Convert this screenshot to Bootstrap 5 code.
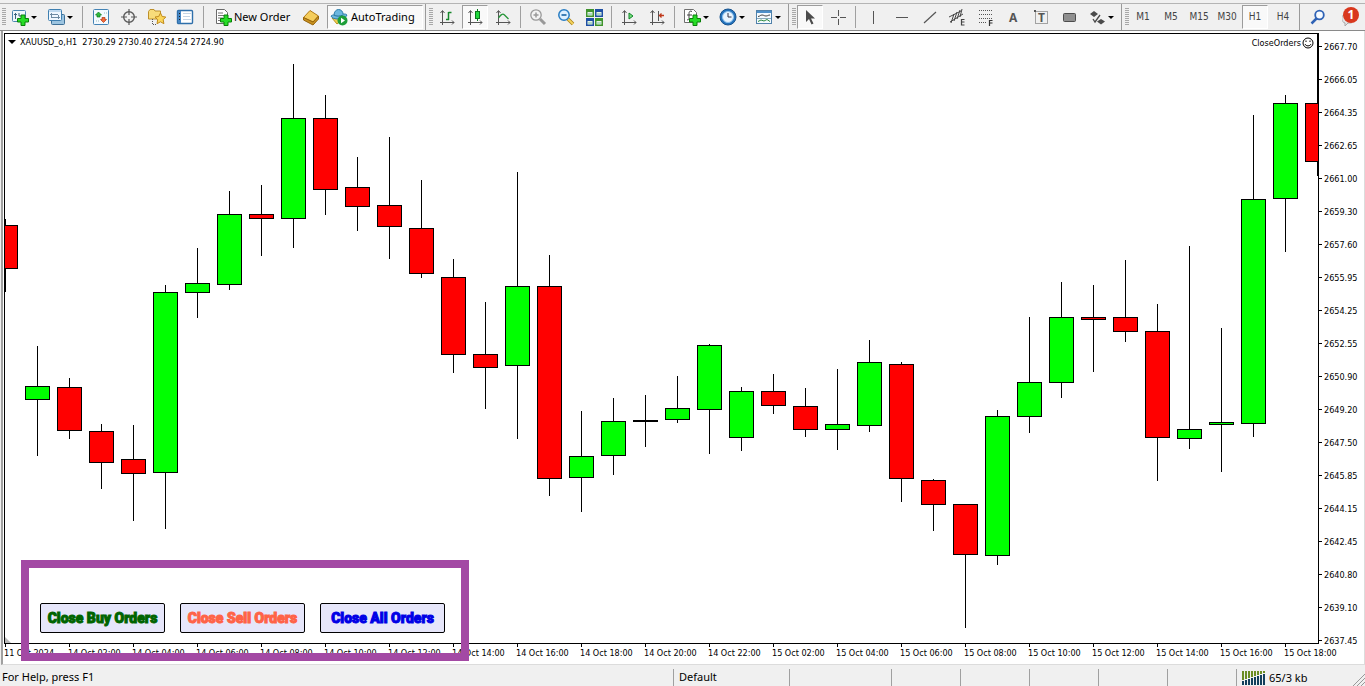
<!DOCTYPE html>
<html lang="en">
<head>
<meta charset="utf-8">
<meta name="viewport" content="width=device-width, initial-scale=1">
<title>XAUUSD_o,H1</title>
<link href="https://cdn.jsdelivr.net/npm/bootstrap@5.3.0/dist/css/bootstrap.min.css" rel="stylesheet">
<style>
  :root { --face: #f0f0f0; --edge: #8a8a8a; --ink: #000; }
  body { background: var(--face); color: var(--ink); font: 11px/16px "Noto Sans", "Open Sans", sans-serif; overflow: hidden; }
  button { color: inherit; }

  /* toolbar */
  .toolstrip { height: 31px; padding-top: 3px; border-bottom: 1px solid var(--edge); background: var(--face); }
  .toolrow { height: 27px; border-top: 1px solid #b4b4b4; }
  .toolgroup + .toolgroup { margin-left: 2px; border-left: 1px solid #9a9a9a; }
  .grip { width: 4px; margin: 4px 0 4px 3px; background: repeating-linear-gradient(#a8a8a8 0 1px, var(--face) 1px 2px); }
  .toolgroup:first-child .grip { margin-left: 2px; }
  .tool { width: 28px; height: 24px; padding: 0; border: 1px solid transparent; background: none; display: flex; align-items: center; justify-content: center; flex: none; }
  .tool svg, .tool-text svg { width: 18px; height: 18px; flex: none; }
  .tool.has-menu { width: 36px; justify-content: flex-start; padding-left: 4px; gap: 2px; }
  .has-menu::after { content: ""; border: 3px solid transparent; border-top-color: #000; border-bottom: 0; }
  .tool-text { border: 1px solid transparent; background: none; padding: 0; height: 24px; display: flex; align-items: center; gap: 2px; white-space: nowrap; flex: none; }
  .order-tool { width: 89px; padding-left: 5px; }
  .trading-tool { width: 96px; padding-left: 2px; margin-left: 2px; gap: 3px; }
  .pressed { background: #f9f9f9; border-color: #9c9c9c #fff #fff #9c9c9c; }
  .tool.pressed { width: 26px; margin: 0 1px; }
  .divide { width: 1px; height: 22px; background: #a0a0a0; margin: 0 3px; flex: none; }
  .period { font: 10px/14px "DejaVu Sans Condensed", "DejaVu Sans", sans-serif; color: #444; }
  .alert-count { top: 1px; left: 5px; width: 16px; height: 16px; border-radius: 8px; background: #d9381e; color: #fff; font: bold 12px/16px "Noto Sans", sans-serif; }

  /* chart window */
  .chartwin { margin-left: 1px; padding: 2px 0 0 1px; border-left: 2px solid #a0a0a0; border-right: 1px solid #dcdcdc; border-bottom: 1px solid #dcdcdc; background: #fff; font: 9px/14px "DejaVu Sans Condensed", "DejaVu Sans", sans-serif; }
  .plot { border: 1px solid #000; overflow: hidden; min-width: 0; }
  .plot svg.candles { width: 100%; height: 100%; display: block; }
  .candles rect, .candles path { stroke: #000; stroke-width: 1; shape-rendering: crispEdges; }
  .up { fill: #0f0; }
  .down { fill: #f00; }
  .symbol { top: 1px; left: 3px; gap: 4px; white-space: pre; }
  .symbol::before { content: ""; border: 4px solid transparent; border-top-color: #000; border-bottom: 0; }
  .expert { top: 2px; right: 4px; gap: 1px; }
  .shift { left: 0; bottom: 0; border: 3px solid transparent; border-left-color: #b8b8b8; border-bottom-color: #b8b8b8; }
  .prices { width: 45px; padding-top: 7px; flex: none; overflow: visible; }
  .prices li { height: 33px; display: flex; align-items: flex-start; gap: 2px; }
  .prices li::before { content: ""; width: 3px; height: 1px; margin-top: 6px; background: #000; }
  .prices li:last-child { height: 14px; margin-bottom: -9px; }
  .times { height: 20px; overflow: hidden; line-height: 12px; }
  .times li { width: 64px; flex: none; white-space: nowrap; }
  .times li::before { content: ""; display: block; width: 1px; height: 3px; margin-left: 1px; background: #000; }

  /* order panel */
  .orders { left: 18px; bottom: 3px; width: 448px; height: 101px; border: 8px solid #a349a4; padding: 35px 0 0 11px; gap: 15px; }
  .order { width: 125px; height: 30px; padding: 0; border: 1px solid #000; border-radius: 2px; background: #e6e6fa; font: 900 14px/24px "Impact", "Roboto", sans-serif; -webkit-text-stroke: 1px currentColor; white-space: nowrap; }
  .buy { color: #006400; }
  .sell { color: #ff6347; }
  .all { color: #0000e6; }

  /* status bar */
  .statusbar { height: 21px; padding-top: 4px; }
  .c-help { padding-left: 2px; }
  .cell { border-left: 1px solid #a0a0a0; padding-left: 5px; white-space: nowrap; flex: none; }
  .c-profile { width: 116px; } .c-date { width: 102px; } .c-price { width: 69px; } .c-net { width: 129px; gap: 3px; }
</style>
</head>
<body class="vh-100 d-flex flex-column">

<nav class="toolstrip flex-shrink-0" aria-label="Toolbar">
 <div class="toolrow d-flex align-items-stretch">
  <div class="toolgroup d-flex align-items-center">
    <span class="grip align-self-stretch"></span>
    <button class="tool has-menu" aria-label="New chart"><svg viewBox="0 0 18 18"><rect x="1.500" y="2.500" width="13" height="11" rx="1" fill="#eef6fb" stroke="#4a86b0"/><path d="M4.500 5v6M3 6.500h3M8 5v3M8 8h5" stroke="#39627e" fill="none"/><path d="M10 7h4v3.500h3.500v3.500H14v3.500h-4V14H6.500v-3.500H10z" fill="#26dc26" stroke="#088008"/></svg></button>
    <button class="tool has-menu" aria-label="Profiles"><svg viewBox="0 0 18 18"><rect x="4.500" y="6.500" width="13" height="10" rx="1" fill="#9cc4e0" stroke="#3d6f96"/><rect x="1.500" y="1.500" width="13" height="11" rx="1" fill="#f0f8ff" stroke="#3f7fb0"/><path d="M2 3h12" stroke="#8ebce0"/><path d="M4.500 5v5M3 6.500h8M5 9.500h8M11.500 7v4" stroke="#6d8ba3" fill="none"/></svg></button>
    <span class="divide mx-1"></span>
    <button class="tool" aria-label="Market Watch"><svg viewBox="0 0 18 18"><rect x="1.500" y="1.500" width="15" height="15" rx="1" fill="#f4faff" stroke="#4383b5"/><path d="M4 13h3M12 5h3" stroke="#9bb" stroke-dasharray="1 1"/><path d="M6.500 4L9.500 7H8v2H5V7H3.500z" fill="#2fbb3d" stroke="#107a20" stroke-width=".7"/><path d="M11.500 14.500L8.500 11.500H10V9.500h3v2h1.500z" fill="#f36c3b" stroke="#b33510" stroke-width=".7"/></svg></button>
    <button class="tool" aria-label="Data Window"><svg viewBox="0 0 18 18" fill="none" stroke="#5a5a5a"><circle cx="9" cy="9" r="5.300" stroke-width="1.400"/><path d="M9 1v6M9 11v6M1 9h6M11 9h6" stroke-width="1.200"/></svg></button>
    <button class="tool" aria-label="Navigator"><svg viewBox="0 0 18 18"><path d="M.500 3.500L2 1.500h4l1 1.500h5.500v8H.500z" fill="#f8dc7a" stroke="#bd902b"/><path d="M4.500 11v5.500H8" stroke="#555" stroke-dasharray="1 1" fill="none"/><path d="M12.500 5l1.700 3.500 3.600.500-2.600 2.700.700 4-3.400-1.900-3.500 1.900.700-4L7 9l3.700-.500z" fill="#fbd65a" stroke="#c08a1c"/></svg></button>
    <button class="tool" aria-label="Terminal"><svg viewBox="0 0 18 18"><rect x="1.500" y="2.500" width="15" height="13" rx="1" fill="#fff" stroke="#2f6faa" stroke-width="1.400"/><rect x="2" y="3" width="3" height="12" fill="#4586c4"/><path d="M7 5.500h8M7 8.500h7M7 11.500h8" stroke="#c4d4e4"/><path d="M3 5.500h1M3 8.500h1M3 11.500h1" stroke="#222"/></svg></button>
    <span class="divide mx-1"></span>
    <button class="tool-text order-tool"><svg viewBox="0 0 18 18"><path d="M2.500 1.500h8l3 3v11h-11z" fill="#fff" stroke="#6b6b6b"/><path d="M4 5h5M4 7.500h7M4 10h5M4 12.500h4" stroke="#777"/><path d="M10 7h4v3.500h3.500v3.500H14v3.500h-4V14H6.500v-3.500H10z" fill="#26dc26" stroke="#088008"/></svg>New Order</button>
    <button class="tool" aria-label="MetaEditor"><svg viewBox="0 0 18 18"><path d="M1.500 9.500L8 2.500l8.500 5.500-5.500 6z" fill="#f5cd5b" stroke="#b17a14"/><path d="M1.500 9.500L11 14l5.500-6v3L11 17l-9.500-5z" fill="#c8911f" stroke="#96640b"/></svg></button>
    <button class="tool-text trading-tool pressed"><svg viewBox="0 0 18 18"><path d="M2 10l5 6 7-6z" fill="#f0cf52" stroke="#ba9321"/><path d="M1 8c1-1 2-1 3-1 0-3 2-5.500 4.500-5.500S13 3.500 13 6c2 0 3.500 0 4 1-1 3-5 4-8.500 4S2 10.500 1 8z" fill="#6cb7df" stroke="#2b7ca9"/><path d="M4 7c2 1.500 6 1.500 9 0" stroke="#247199" fill="none"/><circle cx="12.500" cy="12.500" r="5" fill="#1d9e39"/><path d="M11 9.800v5.400l4-2.700z" fill="#fff"/></svg>AutoTrading</button>
  </div>

  <div class="toolgroup d-flex align-items-center">
    <span class="grip align-self-stretch"></span>
    <button class="tool" aria-label="Bar chart"><svg viewBox="0 0 18 18" fill="none" stroke="#555"><path d="M4.500 17V3M2.500 5l2-2.500 2 2.500M2 14.500h14M14 12.500l2 2-2 2"/><path d="M10.500 4v8M10.500 4.500h3M8 11.500h3" stroke="#16862a" stroke-width="1.500"/></svg></button>
    <button class="tool pressed" aria-label="Candlesticks"><svg viewBox="0 0 18 18" fill="none" stroke="#555"><path d="M4.500 17V3M2.500 5l2-2.500 2 2.500M2 14.500h14M14 12.500l2 2-2 2"/><path d="M11.500 1v12" stroke="#08781b"/><rect x="9.500" y="3.500" width="4" height="7" fill="#20d83d" stroke="#08781b"/></svg></button>
    <button class="tool" aria-label="Line chart"><svg viewBox="0 0 18 18" fill="none" stroke="#555"><path d="M4.500 17V3M2.500 5l2-2.500 2 2.500M2 14.500h14M14 12.500l2 2-2 2"/><path d="M4.500 10c2-3 4-5 6-3l4 4" stroke="#259538" stroke-width="1.300"/></svg></button>
    <span class="divide"></span>
    <button class="tool" aria-label="Zoom in"><svg viewBox="0 0 18 18" fill="none" stroke="#999"><path d="M11 11l5 5" stroke-width="3"/><circle cx="7" cy="7" r="5.200" fill="#f3f3f3" stroke-width="1.300"/><path d="M4.500 7h5M7 4.500v5" stroke-width="1.500"/></svg></button>
    <button class="tool" aria-label="Zoom out"><svg viewBox="0 0 18 18" fill="none"><path d="M11 11l5 5" stroke="#a88118" stroke-width="3.500"/><path d="M11 11l5 5" stroke="#f4d35e" stroke-width="2"/><circle cx="7" cy="7" r="5.200" fill="#dcefff" stroke="#287dc3" stroke-width="1.500"/><path d="M4.500 7h5" stroke="#226ba9" stroke-width="1.700"/></svg></button>
    <button class="tool" aria-label="Tile windows"><svg viewBox="0 0 18 18"><path fill="#3f942e" d="M1 1h8v8H1zM10 10h8v8h-8z"/><path fill="#1f50a4" d="M10 1h8v8h-8zM1 10h8v8H1z"/><path fill="#e8f4e4" d="M2.500 4h5v3.500h-5zM11.500 4h5v3.500h-5zM2.500 13h5v3.500h-5zM11.500 13h5v3.500h-5z"/><path d="M3 6h4M12 6h4M3 15h4M12 15h4" stroke="#7ba"/></svg></button>
    <span class="divide"></span>
    <button class="tool" aria-label="Auto scroll"><svg viewBox="0 0 18 18" fill="none" stroke="#555"><path d="M4.500 17V3M2.500 5l2-2.500 2 2.500M2 14.500h14M14 12.500l2 2-2 2"/><path d="M9 5v6l4-3z" fill="#73df7c" stroke="#118528"/></svg></button>
    <button class="tool" aria-label="Chart shift"><svg viewBox="0 0 18 18" fill="none" stroke="#555"><path d="M4.500 17V3M2.500 5l2-2.500 2 2.500M2 14.500h14M14 12.500l2 2-2 2M10.500 3v10"/><path d="M16 7.500h-4M13.500 5.500l-2 2 2 2" stroke="#c0391b" stroke-width="1.300"/></svg></button>
    <span class="divide"></span>
    <button class="tool has-menu" aria-label="Indicators"><svg viewBox="0 0 18 18"><path d="M1.500 1.500h9l3 3v10h-12z" fill="#fff" stroke="#6f6f6f"/><path d="M9 3.500c-2-1-3 0-3 2v5c0 1-1 2-2 1M4 7h5" fill="none" stroke="#444"/><path d="M10 7h4v3.500h3.500v3.500H14v3.500h-4V14H6.500v-3.500H10z" fill="#26dc26" stroke="#088008"/></svg></button>
    <button class="tool has-menu" aria-label="Periods"><svg viewBox="0 0 18 18"><circle cx="9" cy="9" r="8" fill="#2473bd" stroke="#17538e"/><circle cx="9" cy="9" r="5.500" fill="#e9f5ff" stroke="#8fc3ee"/><path d="M9 5v4h3.500" stroke="#334" fill="none"/></svg></button>
    <button class="tool has-menu" aria-label="Templates"><svg viewBox="0 0 18 18"><rect x="1.500" y="2.500" width="15" height="13" fill="#f4faff" stroke="#5081aa"/><path d="M2 4h14" stroke="#4d8fc9" stroke-width="2"/><path d="M3 8.500c2 0 2-1.500 4-1.500s2 1 4 1 2-1 4-1" stroke="#444" fill="none"/><path d="M2 10.500h14" stroke="#8ab"/><path d="M3 13.500l3-1.500 3 1 3-1.500 3 2" stroke="#2b8a3e" fill="none"/></svg></button>
  </div>

  <div class="toolgroup d-flex align-items-center">
    <span class="grip align-self-stretch"></span>
    <button class="tool pressed" aria-label="Cursor"><svg viewBox="0 0 18 18"><path d="M5 2v12l3-3 2.500 5.500 2-1L10 10.500h4z" fill="#4c4c4c"/></svg></button>
    <button class="tool" aria-label="Crosshair"><svg viewBox="0 0 18 18" stroke="#555"><path d="M9.500 2v6M9.500 11v6M2 9.500h6M11 9.500h6"/></svg></button>
    <span class="divide"></span>
    <button class="tool" aria-label="Vertical line"><svg viewBox="0 0 18 18" stroke="#555"><path d="M9.500 3v13"/></svg></button>
    <button class="tool" aria-label="Horizontal line"><svg viewBox="0 0 18 18" stroke="#555"><path d="M4 9.500h12"/></svg></button>
    <button class="tool" aria-label="Trendline"><svg viewBox="0 0 18 18" stroke="#555"><path d="M4 15L16 4" stroke-width="1.200"/></svg></button>
    <button class="tool" aria-label="Equidistant channel"><svg viewBox="0 0 18 18" stroke="#444" fill="none"><path d="M1 9L13 3M2 14l13-8M3 15L6 6M6 13l3-9M9 11l3-9M12 9l2-8"/><path d="M16.500 11.500h-3v5.500h3M13.500 14h3" stroke-width="1.200"/></svg></button>
    <button class="tool" aria-label="Fibonacci"><svg viewBox="0 0 18 18" stroke="#555" fill="none"><path d="M3 2.500h13M3 6.500h13M3 10.500h13M3 14.500h8" stroke-dasharray="1 1"/><path d="M16.500 12.500h-3V18M13.500 15h3" stroke="#333" stroke-width="1.200"/></svg></button>
    <button class="tool" aria-label="Text"><svg viewBox="0 0 18 18"><text x="5" y="14" font-family="Noto Sans" font-weight="bold" font-size="12" fill="#555">A</text></svg></button>
    <button class="tool" aria-label="Text label"><svg viewBox="0 0 18 18"><rect x="3.500" y="3.500" width="12" height="12" fill="none" stroke="#555" stroke-dasharray="1 1"/><path d="M2 2h2v2H2z" fill="#555"/><text x="6" y="14" font-family="Noto Sans" font-weight="bold" font-size="12" fill="#555">T</text></svg></button>
    <button class="tool" aria-label="Rectangle"><svg viewBox="0 0 18 18"><rect x="3.500" y="5.500" width="12" height="8" rx="1" fill="#8f8f8f" stroke="#4c4c4c"/></svg></button>
    <button class="tool has-menu" aria-label="Arrows"><svg viewBox="0 0 18 18" fill="#4a4a4a"><path d="M6 3l4 3-4 3-4-3zM13 11l4 2.500-4 3-4-3z"/><path d="M5 11l2 3 5-7" fill="none" stroke="#4a4a4a" stroke-width="1.300"/></svg></button>
  </div>

  <div class="toolgroup d-flex align-items-center">
    <span class="grip align-self-stretch"></span>
    <button class="tool period">M1</button>
    <button class="tool period">M5</button>
    <button class="tool period">M15</button>
    <button class="tool period">M30</button>
    <button class="tool period pressed">H1</button>
    <button class="tool period">H4</button>
  </div>

  <div class="toolgroup d-flex align-items-center flex-grow-1 justify-content-between ps-1">
    <button class="tool" aria-label="Search"><svg viewBox="0 0 18 18" fill="none" stroke="#2f62b5"><path d="M7.500 10.500L2.500 15.500" stroke-width="2.500"/><circle cx="10.500" cy="7" r="4.300" fill="#f6faff" stroke-width="1.800"/></svg></button>
    <button class="tool position-relative" aria-label="Messages"><svg viewBox="0 0 18 18"><path d="M1 7.500h8c3 0 3 7 0 7.500H6l-3 3v-3C-1 14-1 8 1 7.500z" fill="#e4e4e4" stroke="#a9a9a9"/></svg><span class="alert-count position-absolute text-center">1</span></button>
  </div>
 </div>
</nav>

<main class="chartwin flex-grow-1 d-flex flex-column position-relative">
  <div class="d-flex flex-grow-1">
    <section class="plot flex-grow-1 position-relative" aria-label="XAUUSD hourly chart">
      <svg class="candles" id="candles"></svg>
      <div class="symbol position-absolute d-flex align-items-center">XAUUSD_o,H1  2730.29 2730.40 2724.54 2724.90</div>
      <div class="expert position-absolute d-flex align-items-center">CloseOrders<svg width="12" height="12" viewBox="0 0 12 12" fill="none" stroke="#000"><circle cx="6" cy="6" r="5"/><path d="M3 7c1 2.500 5 2.500 6 0"/><path d="M4 3.500v1.500M8 3.500v1.500"/></svg></div>
      <span class="shift position-absolute"></span>
    </section>
    <ul class="prices list-unstyled mb-0" id="prices"></ul>
  </div>
  <ul class="times list-unstyled d-flex mb-0" id="times"></ul>
  <div class="orders position-absolute d-flex align-items-start">
    <button class="order buy">Close Buy Orders</button>
    <button class="order sell">Close Sell Orders</button>
    <button class="order all">Close All Orders</button>
  </div>
</main>

<footer class="statusbar d-flex flex-shrink-0">
  <div class="c-help flex-grow-1">For Help, press F1</div>
  <div class="cell c-profile">Default</div>
  <div class="cell c-date"></div>
  <div class="cell c-price"></div>
  <div class="cell c-price"></div>
  <div class="cell c-price"></div>
  <div class="cell c-price"></div>
  <div class="cell c-price"></div>
  <div class="cell c-net d-flex align-items-center position-relative">
    <svg id="signal" width="24" height="14" viewBox="0 0 24 14"></svg>65/3 kb
    <svg class="position-absolute end-0 bottom-0" width="12" height="12" viewBox="0 0 12 12" stroke="#999"><path d="M0 12L12 0M4 12l8-8M8 12l4-4"/></svg>
  </div>
</footer>

<script src="https://cdn.jsdelivr.net/npm/bootstrap@5.3.0/dist/js/bootstrap.bundle.min.js"></script>
<script>
  // one row per hour: high, body top, body bottom, low, direction (d = down, u = up)
  const bars = [
    [219,225,268,291,'d'],[346,386,399,455,'u'],[378,387,430,438,'d'],[424,431,462,488,'d'],[425,459,473,520,'d'],
    [285,292,472,528,'u'],[248,283,292,317,'u'],[191,214,284,289,'u'],[185,214,218,255,'d'],[64,118,218,247,'u'],
    [95,118,189,214,'d'],[157,187,206,230,'d'],[137,205,226,258,'d'],[180,228,273,277,'d'],[259,277,354,372,'d'],
    [302,354,367,408,'d'],[172,286,365,438,'u'],[255,286,478,495,'d'],[411,456,477,511,'u'],[398,421,455,474,'u'],
    [395,420,421,446,'u'],[376,408,419,422,'u'],[344,345,409,453,'u'],[387,391,437,450,'u'],[374,391,405,413,'d'],
    [388,406,429,436,'d'],[369,424,429,449,'u'],[340,362,425,431,'u'],[362,364,478,501,'d'],[479,480,504,530,'d'],
    [504,504,554,627,'d'],[410,416,555,564,'u'],[317,382,416,432,'u'],[282,317,382,397,'u'],[285,317,319,371,'d'],
    [260,317,331,341,'d'],[304,331,437,480,'d'],[246,429,438,448,'u'],[328,422,424,471,'u'],[115,199,423,436,'u'],
    [95,103,198,251,'u'],[34,103,161,175,'d']
  ];
  const step = 32, top0 = 34;
  document.getElementById('candles').innerHTML = bars.map(([hi, t, b, lo, dir], i) => {
    const x = i * step + 0.5, y = v => v - top0 + 0.5;
    return `<path d="M${x} ${hi - top0}V${lo - top0 + 1}"/>` +
      `<rect class="${dir === 'u' ? 'up' : 'down'}" x="${x - 12}" y="${y(t)}" width="24" height="${b - t}"/>`;
  }).join('');

  const prices = ['2667.70','2666.05','2664.35','2662.65','2661.00','2659.30','2657.60','2655.95','2654.25','2652.55',
    '2650.90','2649.20','2647.50','2645.85','2644.15','2642.45','2640.80','2639.10','2637.45'];
  document.getElementById('prices').innerHTML = prices.map(p => `<li>${p}</li>`).join('');

  const hours = (day, list) => list.map(h => `${day} Oct ${h}:00`);
  const times = ['11 Oct 2024',
    ...hours(14, ['02','04','06','08','10','12','14','16','18','20','22']),
    ...hours(15, ['02','04','06','08','10','12','14','16','18'])];
  document.getElementById('times').innerHTML = times.map(t => `<li>${t}</li>`).join('');

  // connection bars: free part on top, used part below
  document.getElementById('signal').innerHTML = [...Array(8).keys()].map(i =>
    `<rect x="${i * 3}" y="0" width="2" height="${9 - i}" fill="#6b8e23"/>` +
    `<rect x="${i * 3}" y="${10 - i}" width="2" height="${4 + i}" fill="#123f5c"/>`).join('');
</script>
</body>
</html>
